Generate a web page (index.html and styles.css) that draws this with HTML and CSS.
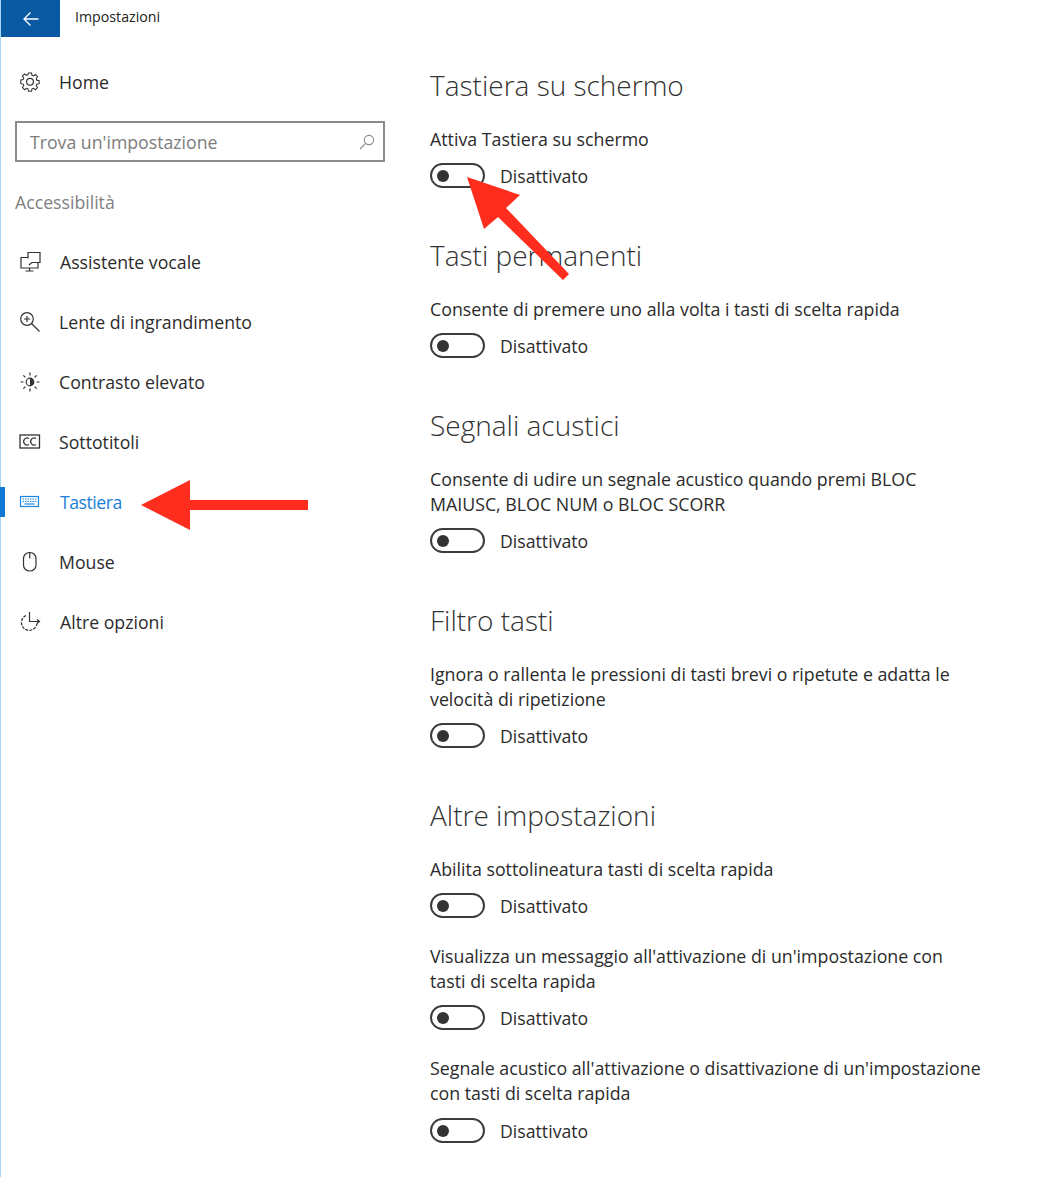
FILE: index.html
```html
<!DOCTYPE html>
<html lang="it">
<head>
<meta charset="utf-8">
<title>Impostazioni</title>
<link rel="stylesheet" href="styles.css">
</head>
<body>
<div class="app">
  <aside class="sidebar">
    <div class="titlebar">
      <div class="back">
        <svg width="18" height="16" viewBox="0 0 18 16"><path d="M16.500 8H2M8.500 1.500 2 8l6.500 6.500" fill="none" stroke="#fff" stroke-width="1.300"/></svg>
      </div>
      <span class="apptitle">Impostazioni</span>
    </div>
    <div class="nav-item">
      <svg class="icon" viewBox="0 0 22 22"><path d="M9.300 1.500h3.400l.5 2.600 1.600.7 2.200-1.500 2.400 2.400-1.500 2.200.7 1.600 2.600.5v3.400l-2.600.5-.7 1.600 1.500 2.200-2.400 2.400-2.200-1.500-1.600.7-.5 2.600H9.300l-.5-2.600-1.600-.7-2.200 1.500-2.400-2.400 1.500-2.200-.7-1.600-2.600-.5V9.300l2.600-.5.7-1.600L2.600 5l2.400-2.400 2.200 1.500 1.600-.7z" transform="translate(1.100 .6) scale(.9)" fill="none" stroke="#333" stroke-width="1.200"/><circle cx="11" cy="10.800" r="3.400" fill="none" stroke="#333" stroke-width="1.200"/></svg>
      <span>Home</span>
    </div>
    <div class="search">
      <span>Trova un'impostazione</span>
      <svg width="16" height="16" viewBox="0 0 16 16"><circle cx="10" cy="6" r="4.600" fill="none" stroke="#8a8a8a" stroke-width="1.100"/><path d="M6.600 9.400 1 15" stroke="#8a8a8a" stroke-width="1.100"/></svg>
    </div>
    <div class="section-label">Accessibilità</div>
    <nav class="nav">
      <div class="nav-item shifted">
        <svg class="icon" viewBox="0 0 22 22"><path d="M9 7.500V1.500h12v10h-8l-3 2.500M9 6.500H2v10.500h17v-5.500M10.500 17v2.500M6.500 20h8" fill="none" stroke="#333" stroke-width="1.200"/></svg>
        <span>Assistente vocale</span>
      </div>
      <div class="nav-item">
        <svg class="icon" viewBox="0 0 22 22"><circle cx="8" cy="8" r="6.300" fill="none" stroke="#333" stroke-width="1.200"/><path d="M12.500 12.500 20.500 20.500M8 5v6M5 8h6" fill="none" stroke="#333" stroke-width="1.200"/></svg>
        <span>Lente di ingrandimento</span>
      </div>
      <div class="nav-item">
        <svg class="icon" viewBox="0 0 22 22"><circle cx="11" cy="11" r="3.800" fill="none" stroke="#333" stroke-width="1.200"/><path d="M11 7.200a3.800 3.800 0 0 1 0 7.600z" fill="#333"/><path d="M11 1.500v3M11 17.500v3M1.500 11h3M17.500 11h3M4.300 4.300l2.100 2.100M15.600 15.600l2.100 2.100M4.300 17.700l2.100-2.100M15.600 6.400l2.100-2.100" stroke="#333" stroke-width="1.200"/></svg>
        <span>Contrasto elevato</span>
      </div>
      <div class="nav-item">
        <svg class="icon" viewBox="0 0 22 22"><rect x="1" y="4" width="19.500" height="13" fill="none" stroke="#333" stroke-width="1.300"/><path d="M10 7.500a3.500 3.500 0 1 0 0 6M17 7.500a3.500 3.500 0 1 0 0 6" fill="none" stroke="#333" stroke-width="1.200"/></svg>
        <span>Sottotitoli</span>
      </div>
      <div class="nav-item active">
        <svg class="icon" viewBox="0 0 22 22"><rect x="1.500" y="5.500" width="18" height="10" fill="none" stroke="#1a86e0" stroke-width="1.200"/><path d="M3.500 8h14M3.500 10.500h14" stroke="#1a86e0" stroke-width="1.200" stroke-dasharray="1.500 1"/><path d="M5.500 13h10" stroke="#1a86e0" stroke-width="1.200"/></svg>
        <span class="active-label">Tastiera</span>
      </div>
      <div class="nav-item">
        <svg class="icon" viewBox="0 0 22 22"><rect x="4.500" y="1.500" width="12.500" height="18.500" rx="6" fill="none" stroke="#333" stroke-width="1.200"/><path d="M10.750 1.500v6" stroke="#333" stroke-width="1.200"/></svg>
        <span>Mouse</span>
      </div>
      <div class="nav-item shifted">
        <svg class="icon" viewBox="0 0 22 22"><path d="M7 4.500a7.800 7.800 0 1 0 11 8" fill="none" stroke="#333" stroke-width="1.300" stroke-dasharray="3 1.200"/><path d="M10.500 1v9.500h9.500M18 8.500l2.500 2-2.500 2" fill="none" stroke="#333" stroke-width="1.200"/></svg>
        <span>Altre opzioni</span>
      </div>
    </nav>
  </aside>
  <main class="content">
    <section class="group">
      <h2>Tastiera su schermo</h2>
      <p>Attiva Tastiera su schermo</p>
      <div class="toggle-row"><span class="toggle"></span><span>Disattivato</span></div>
    </section>
    <section class="group">
      <h2>Tasti permanenti</h2>
      <p>Consente di premere uno alla volta i tasti di scelta rapida</p>
      <div class="toggle-row"><span class="toggle"></span><span>Disattivato</span></div>
    </section>
    <section class="group">
      <h2>Segnali acustici</h2>
      <p>Consente di udire un segnale acustico quando premi BLOC<br>MAIUSC, BLOC NUM o BLOC SCORR</p>
      <div class="toggle-row"><span class="toggle"></span><span>Disattivato</span></div>
    </section>
    <section class="group">
      <h2>Filtro tasti</h2>
      <p>Ignora o rallenta le pressioni di tasti brevi o ripetute e adatta le<br>velocità di ripetizione</p>
      <div class="toggle-row"><span class="toggle"></span><span>Disattivato</span></div>
    </section>
    <section class="group">
      <h2>Altre impostazioni</h2>
      <p>Abilita sottolineatura tasti di scelta rapida</p>
      <div class="toggle-row tight"><span class="toggle"></span><span>Disattivato</span></div>
      <p>Visualizza un messaggio all'attivazione di un'impostazione con<br>tasti di scelta rapida</p>
      <div class="toggle-row tight"><span class="toggle"></span><span>Disattivato</span></div>
      <p>Segnale acustico all'attivazione o disattivazione di un'impostazione<br>con tasti di scelta rapida</p>
      <div class="toggle-row last"><span class="toggle"></span><span>Disattivato</span></div>
    </section>
  </main>
</div>
<svg class="arrow arrow-left" width="167" height="50" viewBox="0 0 167 50"><path d="M0 25 49 0v20h118v10H49v20z" fill="#ff2d1e"/></svg>
<svg class="arrow arrow-diag" width="103" height="103" viewBox="0 0 103 103"><path d="M0 0 53 18 39 31 102 97 96 103 31 40 17 52z" fill="#ff2d1e"/></svg>
</body>
</html>
```
FILE: styles.css
```css
* { box-sizing: border-box; }
html, body { margin: 0; padding: 0; background: #fff; }
body {
  width: 1049px;
  height: 1177px;
  overflow: hidden;
  position: relative;
  font-family: "Open Sans", "Noto Sans", sans-serif;
  font-size: 17.700px;
  color: #2b2b2b;
}
.app { display: flex; height: 1177px; border-left: 1px solid #a8d6f7; }
.sidebar { width: 429px; flex: none; }
.titlebar { display: flex; align-items: center; height: 37px; margin-bottom: 15px; }
.back {
  width: 59px; height: 37px; background: #0a5aa3;
  display: flex; align-items: center; justify-content: center;
}
.apptitle { margin-left: 15px; font-size: 14.200px; color: #222; position: relative; top: -2px; }
.nav-item {
  position: relative;
  display: flex; align-items: center;
  height: 60px;
  padding-left: 18px;
}
.nav-item .icon { width: 22px; height: 22px; margin-right: 18px; flex: none; }
.nav-item.shifted .icon { margin-right: 19px; }
.search {
  display: flex; align-items: center; justify-content: space-between;
  width: 370px; height: 41px;
  margin: 9px 0 0 14px;
  padding: 0 8px 0 13px;
  border: 2px solid #8b8b8b;
  color: #7c7c7c;
}
.section-label { margin: 29px 0 0 14px; height: 22px; line-height: 22px; color: #7f7f7f; }
.nav { margin-top: 19px; }
.active { color: #1a80d8; }
.active .icon { margin-right: 19px; }
.active-label { letter-spacing: -0.5px; }
.active::before {
  content: ""; position: absolute; left: -1px; top: 15px;
  width: 5px; height: 30px; background: #0f78d4;
}
.content { flex: 1; padding-top: 66px; }
.group { margin-bottom: 48px; }
h2 { margin: 0 0 23px; font-size: 28px; font-weight: 300; line-height: 38px; color: #333; height: 38px; }
p { margin: 0; line-height: 25px; font-size: 17.800px; }
.toggle-row { display: flex; align-items: center; gap: 15px; height: 25px; margin-top: 11px; }
.toggle-row.tight { margin-bottom: 26px; }
.toggle-row.last { margin-top: 12px; }
.toggle {
  position: relative; display: block;
  width: 55px; height: 25px;
  border: 2px solid #3c3c3c; border-radius: 13px;
}
.toggle::after {
  content: ""; position: absolute; left: 5px; top: 4.500px;
  width: 12px; height: 12px; border-radius: 50%; background: #333;
}
.arrow { position: absolute; }
.arrow-left { left: 141px; top: 480px; }
.arrow-diag { left: 467px; top: 177px; }
```
